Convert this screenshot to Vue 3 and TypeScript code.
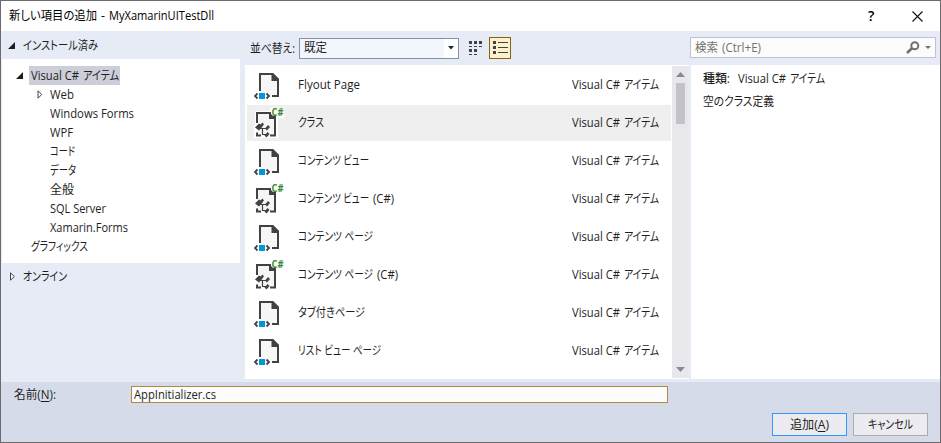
<script setup lang="ts">
import { ref } from 'vue'

type Segment = [text: string, width: number]
interface TreeNode { parts: Segment[]; expandable?: boolean }
interface Template { parts: Segment[]; kind: 'xaml' | 'code' }

// Condenses a label so that it takes up exactly the given width.
const vFit = {
  mounted(el: HTMLElement, binding: { value: number }) {
    const natural = el.getBoundingClientRect().width
    el.style.transform = `scaleX(${binding.value / natural})`
    el.style.marginRight = `${binding.value - natural}px`
  },
}

const categories: TreeNode[] = [
  { parts: [['Web', 24]], expandable: true },
  { parts: [['Windows Forms', 84]] },
  { parts: [['WPF', 23]] },
  { parts: [['コード', 25]] },
  { parts: [['データ', 26]] },
  { parts: [['全般', 24]] },
  { parts: [['SQL Server', 56]] },
  { parts: [['Xamarin.Forms', 78]] },
]

const templates: Template[] = [
  { parts: [['Flyout Page', 62]], kind: 'xaml' },
  { parts: [['クラス', 26]], kind: 'code' },
  { parts: [['コンテンツ ビュー', 71]], kind: 'xaml' },
  { parts: [['コンテンツ ビュー', 71], ['(C#)', 21]], kind: 'code' },
  { parts: [['コンテンツ ページ', 75]], kind: 'xaml' },
  { parts: [['コンテンツ ページ', 75], ['(C#)', 21]], kind: 'code' },
  { parts: [['タブ付きページ', 67]], kind: 'xaml' },
  { parts: [['リスト ビュー ページ', 83]], kind: 'xaml' },
]

const selected = ref(1)
const fileName = ref('AppInitializer.cs')
</script>

<template>
  <div class="dialog">
    <header class="titlebar">
      <span class="label title"><i v-fit="88">新しい項目の追加</i><i v-fit="4">-</i><i v-fit="105">MyXamarinUITestDll</i></span>
      <span class="help">?</span>
      <svg class="close" width="11" height="11" viewBox="0 0 11 11"><path d="M.5.5l10 10M10.5.5l-10 10" stroke="#111" stroke-width="1.1" /></svg>
    </header>

    <main class="body">
      <aside class="sidebar">
        <div class="group">
          <svg class="arrow" width="8" height="8" viewBox="0 0 8 8"><path d="M7 0v7H0z" fill="#1e1e1e" /></svg>
          <span class="label"><i v-fit="75">インストール済み</i></span>
        </div>
        <div class="tree">
          <div class="node root">
            <svg class="arrow" width="8" height="8" viewBox="0 0 8 8"><path d="M7 0v7H0z" fill="#1e1e1e" /></svg>
            <span class="label current"><i v-fit="48">Visual C#</i><i v-fit="36">アイテム</i></span>
          </div>
          <div v-for="(node, n) in categories" :key="n" class="node child">
            <svg v-if="node.expandable" class="arrow" width="6" height="9" viewBox="0 0 6 9"><path d="M1 .8v7.4L4.8 4.5z" fill="#fff" stroke="#444" /></svg>
            <span v-else class="arrow-space"></span>
            <span class="label"><i v-for="part in node.parts" :key="part[0]" v-fit="part[1]">{{ part[0] }}</i></span>
          </div>
          <div class="node plain"><span class="label"><i v-fit="57">グラフィックス</i></span></div>
        </div>
        <div class="group online">
          <svg class="arrow" width="8" height="9" viewBox="0 0 8 9"><path d="M2.500 .8v7.400L6.300 4.500z" fill="#fff" stroke="#444" /></svg>
          <span class="label"><i v-fit="44">オンライン</i></span>
        </div>
      </aside>

      <section class="center">
        <div class="toolbar">
          <span class="label sort-label"><i v-fit="45">並べ替え:</i></span>
          <div class="combo">
            <span class="label"><i v-fit="23">既定</i></span>
            <span class="drop"><svg width="6" height="4" viewBox="0 0 6 4"><path d="M0 0h6L3 3.5z" fill="#1b293e" /></svg></span>
          </div>
          <svg class="grid-view" width="14" height="14" viewBox="0 0 14 14" fill="#424242">
            <path d="M0 0h3v3H0zM5 0h3v3H5zM10 0h3v3h-3zM0 8h3v3H0zM5 8h3v3H5z" />
            <path d="M0 5h3v1H0zM5 5h3v1H5zM10 5h3v1h-3zM0 13h3v1H0zM5 13h3v1H5z" />
          </svg>
          <button class="list-view">
            <svg width="15" height="14" viewBox="0 0 15 14" fill="#424242"><path d="M0 0h3v3H0zM0 5h3v3H0zM0 10h3v3H0zM5 1h10v1H5zM5 6h10v1H5zM5 11h10v1H5z" /></svg>
          </button>
        </div>
        <div class="list-area">
          <ul class="list">
            <li v-for="(item, n) in templates" :key="n" :class="{ active: n === selected }" @click="selected = n">
              <svg v-if="item.kind === 'xaml'" class="icon" width="32" height="32" viewBox="0 0 32 32">
                <path d="M6 5h12l6 6v17H6z" fill="#f7f7f7" />
                <path d="M6 22V5h12.500l5.500 5.500V27h-6" fill="none" stroke="#424242" stroke-width="2" />
                <path d="M17.500 4h1.500l6 6v2h-7.500z" fill="#424242" />
                <path d="M3.500 24.500L1 27l2.500 2.500M12.500 24.500l2.500 2.500-2.500 2.500" fill="none" stroke="#424242" stroke-width="1.800" />
                <path d="M5 24h6v6H5z" fill="#0097dc" />
              </svg>
              <svg v-else class="icon" width="32" height="32" viewBox="0 0 32 32">
                <path d="M1 4h15V1h14v10h-6v20H0V18h1z" fill="#fff" />
                <path d="M3 6h13l5 6v17H3z" fill="#f5f5f5" />
                <path d="M3 16V6h12.500M21 12v16.500h-5" fill="none" stroke="#424242" stroke-width="2" />
                <path d="M15 5v7h7v-3h-3L17 7V5z" fill="#424242" />
                <path d="M1 20.500l4-4 4 2.500-4 4.500zM6.500 17.500l2-2 1.500 2-2 2z" fill="#424242" />
                <path d="M6 21.500h6M8.500 21.500v6h3.500" fill="none" stroke="#424242" stroke-width="1.200" />
                <path d="M11 21.500l3-3.500 2 2-3 3.500zM10.500 28.500l3-3.500 2 2-3 3.500z" fill="#424242" />
                <path d="M3 25.500v3h4" fill="none" stroke="#424242" stroke-width="2" />
                <text x="17.500" y="9" class="sharp" textLength="12" lengthAdjust="spacingAndGlyphs">C#</text>
              </svg>
              <span class="label name"><i v-for="part in item.parts" :key="part[0]" v-fit="part[1]">{{ part[0] }}</i></span>
              <span class="label type"><i v-fit="48">Visual C#</i><i v-fit="35">アイテム</i></span>
            </li>
          </ul>
          <div class="scrollbar">
            <svg width="9" height="5" viewBox="0 0 9 5"><path d="M0 5h9L4.500 0z" fill="#868999" /></svg>
            <div class="thumb"></div>
            <svg width="9" height="5" viewBox="0 0 9 5"><path d="M0 0h9L4.500 5z" fill="#868999" /></svg>
          </div>
        </div>
      </section>

      <aside class="details">
        <div class="search">
          <span class="label"><i v-fit="23">検索</i><i v-fit="39">(Ctrl+E)</i></span>
          <svg class="lens" width="14" height="13" viewBox="0 0 14 13"><circle cx="8.800" cy="4.700" r="3.500" fill="none" stroke="#717171" stroke-width="2" /><path d="M6.200 7L1 12" stroke="#717171" stroke-width="2.600" /></svg>
          <svg width="6" height="4" viewBox="0 0 6 4"><path d="M0 0h6L3 3z" fill="#717171" /></svg>
        </div>
        <div class="info">
          <p class="label"><b v-fit="27">種類:</b><i class="kind" v-fit="48">Visual C#</i><i v-fit="35">アイテム</i></p>
          <p class="label"><i v-fit="71">空のクラス定義</i></p>
        </div>
      </aside>
    </main>

    <footer class="footer">
      <div class="name-row">
        <span class="label name-label"><i v-fit="42">名前(<u>N</u>):</i></span>
        <div class="field"><span class="label"><i v-fit="82">{{ fileName }}</i></span></div>
      </div>
      <div class="actions">
        <button class="btn primary"><span class="label"><i v-fit="39">追加(<u>A</u>)</i></span></button>
        <button class="btn"><span class="label"><i v-fit="45">キャンセル</i></span></button>
      </div>
    </footer>
  </div>
</template>

<style>
body { margin: 0; }
</style>

<style scoped>
.dialog {
  box-sizing: border-box;
  width: 941px;
  height: 443px;
  display: flex;
  flex-direction: column;
  border: 1px solid #6b6a6f;
  background: #e6ebf5;
  color: #1e1e1e;
  font: 12px/18px "Open Sans", "Noto Sans CJK JP", sans-serif;
  overflow: hidden;
}
.label { display: flex; align-items: center; gap: 4px; white-space: pre; font-feature-settings: "palt"; }
.label i, .label b { display: inline-block; flex: none; font-style: normal; transform-origin: 0 50%; }
.label b { font-weight: 500; }
.titlebar { height: 30px; flex: none; display: flex; align-items: center; background: #fff; color: #000; }
.title { flex: 1; padding-left: 8px; }
.help { width: 8px; margin-right: 36px; font-size: 14px; font-weight: 600; }
.close { margin-right: 17px; }
.body { height: 351px; flex: none; display: grid; grid-template-columns: 244px 445px 250px; }

.sidebar { padding-right: 5px; }
.group { height: 28px; box-sizing: border-box; display: flex; align-items: center; padding: 2px 0 0 7px; gap: 7px; }
.tree { height: 204px; box-sizing: border-box; margin-left: 1px; padding-top: 7px; background: #fff; }
.node { height: 19px; display: flex; align-items: center; }
.root { padding-left: 14px; gap: 5px; }
.current { height: 19px; padding: 0 1px 0 2px; background: #ccceda; }
.child { padding-left: 35px; gap: 7px; }
.child .label, .plain .label { padding-top: 1px; }
.arrow-space { width: 6px; }
.plain { padding-left: 29px; }
.online { height: 27px; padding-top: 0; }

.center { display: flex; flex-direction: column; }
.toolbar { height: 34px; display: flex; align-items: center; padding-left: 5px; }
.sort-label { width: 49px; padding-top: 1px; }
.combo { box-sizing: border-box; width: 160px; height: 21px; border: 1px solid #8591a8; background: #f3f6fd; display: flex; justify-content: space-between; padding-left: 4px; }
.drop { width: 14px; display: flex; align-items: center; justify-content: center; background: #fff; }
.grid-view { margin-left: 10px; }
.list-view { box-sizing: border-box; width: 22px; height: 22px; margin-left: 6px; padding: 0 0 0 1px; border: 1px solid #8b6310; background: #fdf0cd; display: flex; align-items: center; justify-content: center; }
.list-area { height: 314px; box-sizing: border-box; display: flex; padding-top: 1px; background: #fff; border-right: 1px solid #e6ebf5; }
.list { width: 427px; flex: none; box-sizing: border-box; margin: 0; padding: 0 1px 0 2px; list-style: none; }
.list li { height: 36px; margin: 1px 0 2px; display: flex; align-items: center; }
.list li + li { margin-top: 2px; }
.list li.active { background: #efefef; }
.icon { margin-left: 7px; overflow: visible; }
.name { width: 274px; margin-left: 12px; }
.scrollbar { width: 17px; height: 312px; box-sizing: border-box; display: flex; flex-direction: column; align-items: center; padding: 6px 0; background: #e8e8ec; }
.thumb { width: 9px; height: 41px; margin: 6px 0 auto; background: #c2c3c9; }
.sharp { fill: #388a34; font: 700 10px/10px "Open Sans", sans-serif; }

.search { box-sizing: border-box; width: 246px; height: 21px; margin: 6px 0 7px; padding: 0 4px; border: 1px solid #b9c3d3; background: #fcfcfc; color: #717171; display: flex; align-items: center; }
.lens { margin: 0 5px 0 auto; }
.info { height: 314px; box-sizing: border-box; margin-left: 1px; padding: 5px 12px; background: #fff; }
.info p { margin: 0 0 5px; }
.kind { margin-left: 4px; }

.footer { flex: 1; background: #d6dbe9; }
.name-row { height: 25px; display: flex; align-items: center; padding-left: 13px; }
.name-label { width: 117px; padding-top: 1px; }
.field { box-sizing: border-box; width: 537px; height: 17px; border: 1px solid #b08a3c; background: #fcfcfc; padding-left: 2px; display: flex; align-items: center; }
.actions { display: flex; justify-content: flex-end; gap: 6px; padding: 6px 12px 0 0; }
.btn { box-sizing: border-box; width: 75px; height: 23px; padding: 0; display: flex; align-items: center; justify-content: center; border: 1px solid #acacac; background: #ececf0; color: #1e1e1e; font: inherit; }
.btn.primary { border: 1px solid #3399ff; }
u { text-underline-offset: 2px; }
</style>
